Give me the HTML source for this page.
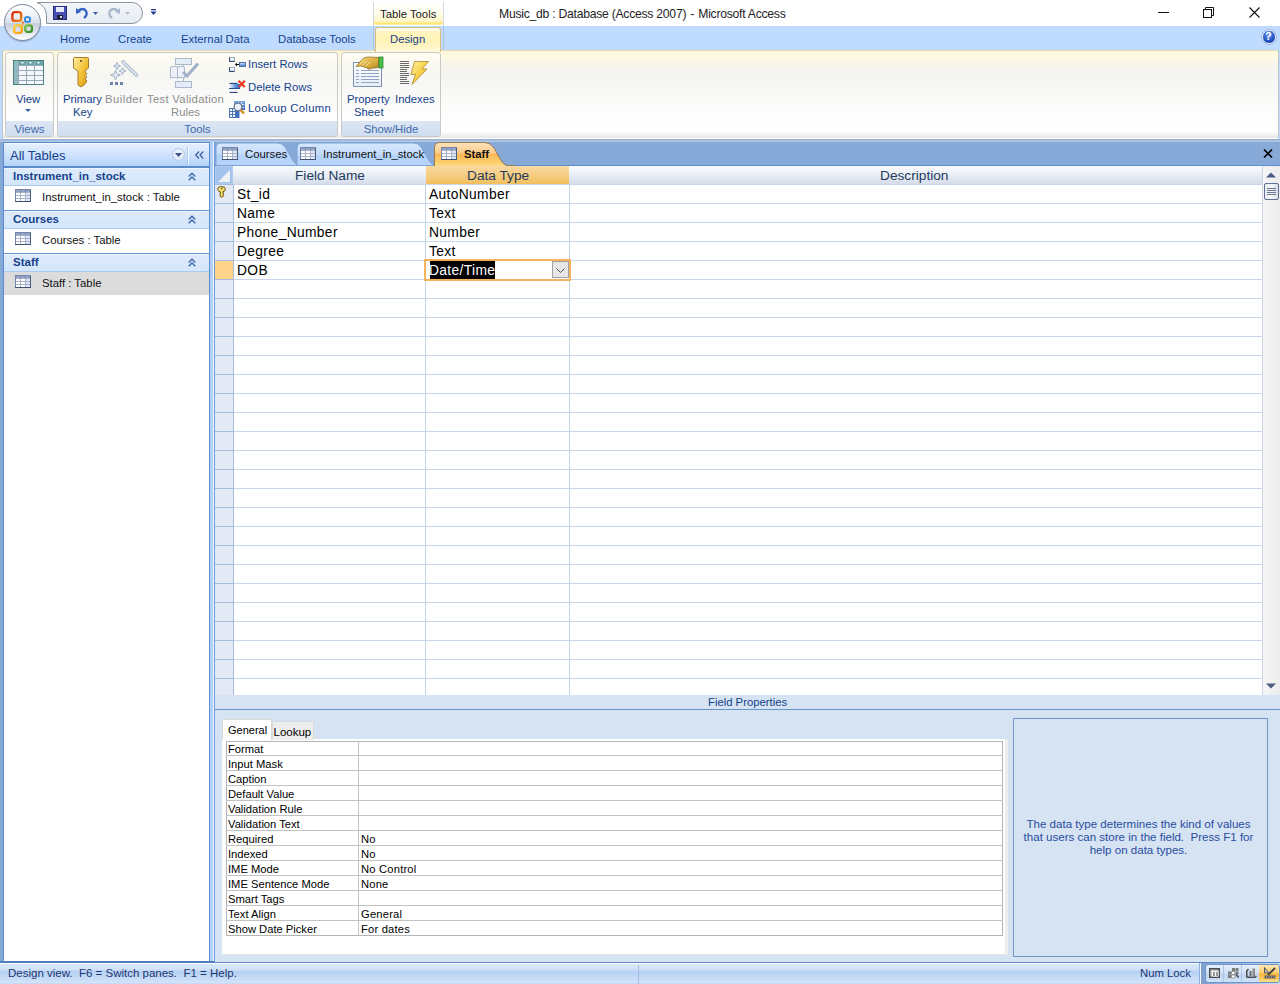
<!DOCTYPE html>
<html><head><meta charset="utf-8">
<style>
*{box-sizing:border-box}
html,body{margin:0;padding:0}
body{width:1280px;height:984px;overflow:hidden;position:relative;background:#BFDBFF;font-family:"Liberation Sans",sans-serif;font-size:12px;color:#000}
.a{position:absolute}
.t{position:absolute;white-space:nowrap;line-height:1}
svg{position:absolute;overflow:visible}
.tab{color:#15428B;font-size:11.3px;margin-top:1px}
.grp{position:absolute;top:52px;height:85px;border:1px solid #C9C9C6;border-radius:3px;background:linear-gradient(#FEFCF2,#F8F7F1 20%,#F6F6F4 30%,#FBFBFA 60%,#fff 85%)}
.glbl{position:absolute;left:0;right:0;bottom:0;height:15px;background:linear-gradient(#DDE6F3,#CFDDF0);color:#3D6AAC;text-align:center;font-size:11.3px;line-height:17px;border-radius:0 0 2px 2px}
.rb{color:#15428B;font-size:11.3px}
.dis{color:#8C8C8C}
.pf{font-size:11.2px;color:#000}
.dsf{font-size:13.8px;letter-spacing:0.35px;color:#000}
</style></head><body>

<!-- ========== TITLE BAR ========== -->
<div class="a" style="left:0;top:0;width:1280px;height:26px;background:#fff"></div>
<!-- QAT pill -->
<svg style="left:0;top:0" width="160" height="26" viewBox="0 0 160 26">
 <defs><linearGradient id="qg" x1="0" y1="0" x2="0" y2="1"><stop offset="0" stop-color="#F3F6FA"/><stop offset="1" stop-color="#E6ECF3"/></linearGradient></defs>
 <path d="M37 2.5 H132 A10.5 10.5 0 0 1 132 23.5 H46.5 V16 Q46.5 6 37 2.5 Z" fill="url(#qg)" stroke="#8C939C" stroke-width="1"/>
</svg>
<!-- save -->
<svg style="left:53px;top:6px" width="14" height="14" viewBox="0 0 14 14">
 <rect x="0.5" y="0.5" width="13" height="13" fill="#4A4FB8" stroke="#2A2E7A"/>
 <rect x="3" y="1" width="8" height="5" fill="#E8EAF8"/>
 <rect x="4" y="9" width="6" height="4" fill="#1E1E2E"/>
 <rect x="7" y="10" width="2" height="2" fill="#ddd"/>
</svg>
<!-- undo -->
<svg style="left:75px;top:6px" width="30" height="14" viewBox="0 0 30 14">
 <path d="M3 5 Q8 1 11 5 Q13 9 9 12" fill="none" stroke="#3564C2" stroke-width="2.3"/>
 <path d="M1 2 L1 8 L6 6 Z" fill="#3564C2"/>
 <path d="M18 6 L23 6 L20.5 9 Z" fill="#3B5FA8"/>
</svg>
<!-- redo -->
<svg style="left:106px;top:6px" width="30" height="14" viewBox="0 0 30 14">
 <path d="M12 5 Q7 1 4 5 Q2 9 6 12" fill="none" stroke="#A9B6CB" stroke-width="2.3"/>
 <path d="M14 2 L14 8 L9 6 Z" fill="#A9B6CB"/>
 <path d="M19 6 L24 6 L21.5 9 Z" fill="#B3BCCB"/>
</svg>
<!-- customize qat -->
<svg style="left:150px;top:8px" width="8" height="8" viewBox="0 0 8 8">
 <rect x="1" y="1" width="5" height="1.3" fill="#1F3D8A"/>
 <path d="M0.5 3.5 L6.5 3.5 L3.5 7 Z" fill="#1F3D8A"/>
</svg>
<!-- Table Tools contextual header -->
<div class="a" style="left:373px;top:2px;width:71px;height:24px;background:linear-gradient(#FFFFFF,#FFFDF0 40%,#FFF6C8 80%,#FFE45A 92%,#FFFFFF 96%);border-left:1px solid #D6D9DE;border-right:1px solid #D6D9DE"></div>
<div class="t" style="left:380px;top:9px;font-size:11.3px;color:#1A1A1A">Table Tools</div>
<div class="t" style="left:499px;top:8px;font-size:12.2px;letter-spacing:-0.26px;color:#1E1E1E">Music_db : Database (Access 2007) <span style="margin:0 1px">-</span> Microsoft Access</div>
<!-- window controls -->
<svg style="left:1158px;top:12px" width="11" height="2"><rect width="11" height="1" fill="#111"/></svg>
<svg style="left:1203px;top:7px" width="11" height="11" viewBox="0 0 11 11"><rect x="0.5" y="2.5" width="8" height="8" fill="none" stroke="#111"/><path d="M2.5 2.5 V0.5 H10.5 V8.5 H8.5" fill="none" stroke="#111"/></svg>
<svg style="left:1249px;top:7px" width="11" height="11" viewBox="0 0 11 11"><path d="M0.5 0.5 L10.5 10.5 M10.5 0.5 L0.5 10.5" stroke="#111" stroke-width="1.1"/></svg>

<!-- ========== TAB ROW ========== -->
<div class="a" style="left:0;top:26px;width:1280px;height:24px;background:#BFDBFF"></div>
<div class="a" style="left:373px;top:26px;width:1px;height:24px;background:#AFC3DB"></div>
<div class="a" style="left:443px;top:26px;width:1px;height:24px;background:#AFC3DB"></div>
<div class="t tab" style="left:60px;top:33px">Home</div>
<div class="t tab" style="left:118px;top:33px">Create</div>
<div class="t tab" style="left:181px;top:33px">External Data</div>
<div class="t tab" style="left:278px;top:33px">Database Tools</div>
<!-- help -->
<div class="a" style="left:1262px;top:30px;width:14px;height:14px;border-radius:50%;background:radial-gradient(circle at 45% 35%,#6E9BF0,#1C4FC2 60%,#0C2F8E);border:1px solid #E9EEF7;box-shadow:0 0 0 0.5px #6C86B4"></div>
<div class="t" style="left:1265px;top:31px;font-size:11px;font-weight:bold;color:#fff">?</div>

<!-- ========== RIBBON ========== -->
<div class="a" style="left:2px;top:50px;width:1277px;height:89px;border:1px solid #C2C2C0;border-top-color:#E6DDB8;border-bottom-color:#FFFFFF;border-radius:3px;background:linear-gradient(#FFF8DA 0px,#FEF9E4 6px,#F5F4EE 18px,#F6F6F3 30px,#FCFCFB 55px,#FFFFFF 80px,#F2F2F2 84px,#E6E6E6 87px)"></div>
<!-- Design tab -->
<div class="a" style="left:375px;top:27px;width:66px;height:25px;border:1px solid #D3C07F;border-bottom:none;border-radius:3px 3px 0 0;background:linear-gradient(#FFFDF2 0,#FFFDF2 2px,#FFF5C0 3px,#FFF3B6 50%,#FFF7D2 100%)"></div>
<div class="a" style="left:376px;top:49px;width:64px;height:3px;background:#FFF7D6"></div>
<div class="t tab" style="left:390px;top:33px">Design</div>

<!-- Views group -->
<div class="grp" style="left:5px;width:49px"><div class="glbl">Views</div></div>
<!-- Tools group -->
<div class="grp" style="left:57px;width:281px"><div class="glbl">Tools</div></div>
<!-- Show/Hide group -->
<div class="grp" style="left:341px;width:100px"><div class="glbl">Show/Hide</div></div>

<!-- View icon -->
<svg style="left:13px;top:60px" width="31" height="25" viewBox="0 0 31 25">
 <rect x="0.5" y="0.5" width="30" height="24" fill="#F4F7FB" stroke="#4F7F86"/>
 <rect x="1" y="1" width="29" height="4" fill="#6AA5A8"/>
 <rect x="1" y="1" width="4" height="23" fill="#8FBCBE"/>
 <path d="M5 5.5 H30 M1 10.5 H30 M1 15.5 H30 M1 20.5 H30 M5.5 1 V24 M13.5 1 V24 M21.5 1 V24" stroke="#9AA9B8" stroke-width="1"/>
 <path d="M8 2 L11 2 L9.5 4 Z M16 2 L19 2 L17.5 4 Z M24 2 L27 2 L25.5 4 Z" fill="#fff"/>
</svg>
<div class="t rb" style="left:16px;top:94px">View</div>
<svg style="left:25px;top:109px" width="6" height="4"><path d="M0 0 H6 L3 3 Z" fill="#3A5F9F"/></svg>

<!-- Primary key -->
<svg style="left:72px;top:56px" width="18" height="32" viewBox="0 0 18 32">
 <defs><linearGradient id="kg" x1="0" y1="0" x2="1" y2="1"><stop offset="0" stop-color="#FFF2A8"/><stop offset="0.5" stop-color="#F3C43A"/><stop offset="1" stop-color="#D99A16"/></linearGradient></defs>
 <path d="M2.5 1.5 H15.5 Q16.5 1.5 16.5 2.5 V12 L13 15 V16 L15 17.5 L13 19.5 L15 21 L13 23 L15 25 L12 29 L9 31 L6 29 V15 L1.5 12 V2.5 Q1.5 1.5 2.5 1.5 Z" fill="url(#kg)" stroke="#A67A2E" stroke-width="1"/>
 <rect x="8" y="4" width="2" height="2" fill="#8A6A2A"/>
</svg>
<div class="t rb" style="left:63px;top:94px">Primary</div>
<div class="t rb" style="left:73px;top:107px">Key</div>

<!-- Builder -->
<svg style="left:110px;top:60px" width="28" height="25" viewBox="0 0 28 25">
 <path d="M13 2 L26.5 15" stroke="#A9B7CC" stroke-width="3.6" stroke-linecap="round"/>
 <path d="M13 2 L26.5 15" stroke="#E6ECF4" stroke-width="1.6" stroke-linecap="round"/>
 <path d="M7 2.4 L8.008000000000001 4.992 L10.6 6 L8.008000000000001 7.008 L7 9.6 L5.992 7.008 L3.4 6 L5.992 4.992 Z" fill="#E3E9F2" stroke="#9AABC3" stroke-width="0.9"/>
 <path d="M12.5 7.4 L13.508000000000001 9.991999999999999 L16.1 11 L13.508000000000001 12.008000000000001 L12.5 14.6 L11.491999999999999 12.008000000000001 L8.9 11 L11.491999999999999 9.991999999999999 Z" fill="#E3E9F2" stroke="#9AABC3" stroke-width="0.9"/>
 <path d="M5.5 10 L6.9 13.6 L10.5 15 L6.9 16.4 L5.5 20 L4.1 16.4 L0.5 15 L4.1 13.6 Z" fill="#E3E9F2" stroke="#9AABC3" stroke-width="0.9"/>
 <rect x="0" y="22" width="3" height="3" fill="#6F84A8"/><rect x="5" y="22" width="3" height="3" fill="#6F84A8"/><rect x="10" y="22" width="3" height="3" fill="#6F84A8"/>
</svg>
<div class="t rb dis" style="left:105px;top:94px;letter-spacing:0.45px">Builder</div>

<!-- Test validation rules -->
<svg style="left:170px;top:58px" width="30" height="30" viewBox="0 0 30 30">
 <rect x="5.5" y="0.5" width="16" height="6" fill="#E6ECF5" stroke="#A9B8CD"/>
 <rect x="5.5" y="23.5" width="16" height="6" fill="#E6ECF5" stroke="#A9B8CD"/>
 <path d="M13.5 6.5 V8 M13.5 20 V23.5" stroke="#A9B8CD"/>
 <path d="M0.5 9 Q4 7.5 7.5 9 Q11 7.5 14.5 9 V20 Q11 18.5 7.5 20 Q4 18.5 0.5 20 Z" fill="#EEF2F8" stroke="#A9B8CD"/>
 <path d="M7.5 9 V20" stroke="#A9B8CD"/>
 <path d="M13 14 L17 18 L28 5.5" fill="none" stroke="#A0B0C8" stroke-width="3"/>
</svg>
<div class="t rb dis" style="left:147px;top:94px;letter-spacing:0.3px">Test Validation</div>
<div class="t rb dis" style="left:171px;top:107px">Rules</div>

<!-- small buttons -->
<svg style="left:229px;top:57px" width="17" height="15" viewBox="0 0 17 15">
 <defs><linearGradient id="wg" x1="0" y1="0" x2="0" y2="1"><stop offset="0" stop-color="#FFFFFF"/><stop offset="1" stop-color="#C9D8EE"/></linearGradient>
 <linearGradient id="bg1" x1="0" y1="0" x2="0" y2="1"><stop offset="0" stop-color="#D6E6FC"/><stop offset="1" stop-color="#3F78D2"/></linearGradient></defs>
 <rect x="0.5" y="0.5" width="5" height="4" fill="url(#wg)" stroke="#8696B3" stroke-width="0.8"/>
 <path d="M0.5 4.5 H5.5 M0.5 0.5 V4.5" stroke="#33466E" stroke-width="1"/>
 <rect x="0.5" y="10.5" width="5" height="4" fill="url(#wg)" stroke="#8696B3" stroke-width="0.8"/>
 <path d="M0.5 14.5 H5.5 M0.5 10.5 V14.5" stroke="#33466E" stroke-width="1"/>
 <path d="M7 7.5 H10" stroke="#000" stroke-width="1"/>
 <path d="M6 7.5 L8 5.8 V9.2 Z" fill="#000"/>
 <rect x="10.5" y="5.5" width="6" height="4" fill="url(#bg1)" stroke="#2E5696" stroke-width="0.8"/>
</svg>
<div class="t rb" style="left:248px;top:59px">Insert Rows</div>
<svg style="left:229px;top:80px" width="17" height="14" viewBox="0 0 17 14">
 <defs><linearGradient id="bg2" x1="0" y1="0" x2="1" y2="0"><stop offset="0" stop-color="#FFFFFF"/><stop offset="0.6" stop-color="#5D92E0"/><stop offset="1" stop-color="#2C5BB0"/></linearGradient></defs>
 <rect x="0.5" y="0.5" width="8" height="3" fill="url(#wg)"/><path d="M0.5 3.5 H8.5" stroke="#33466E"/>
 <rect x="0" y="4" width="11" height="5" fill="url(#bg2)"/><path d="M0 8.5 H11" stroke="#2A4E8E"/>
 <rect x="0.5" y="9.5" width="8" height="3" fill="url(#wg)"/><path d="M0.5 12.5 H8.5" stroke="#33466E"/>
 <path d="M9.5 0.8 L15.8 7 M15.8 0.8 L10 7" stroke="#EE3A22" stroke-width="2.2"/>
</svg>
<div class="t rb" style="left:248px;top:82px">Delete Rows</div>
<svg style="left:229px;top:101px" width="17" height="17" viewBox="0 0 17 17">
 <defs><linearGradient id="bg3" x1="0" y1="0" x2="0" y2="1"><stop offset="0" stop-color="#7FA8E6"/><stop offset="1" stop-color="#3A6CC4"/></linearGradient></defs>
 <rect x="5" y="0" width="11" height="9" fill="url(#bg3)"/>
 <path d="M6 3.5 H15 M6 6.5 H15 M9.5 1 V9 M12.5 1 V9" stroke="#E4EEFB" stroke-width="0.9"/>
 <rect x="0.5" y="7.5" width="9.5" height="9" fill="#F4F8FD" stroke="#4C73B5"/>
 <path d="M0.5 10.5 H10 M0.5 13.5 H10 M3.5 7.5 V16.5 M6.5 7.5 V16.5" stroke="#4C73B5"/>
 <rect x="7" y="9" width="3" height="7.5" fill="#3E6CC0"/>
 <circle cx="9" cy="6" r="3.8" fill="#E9F1FB" stroke="#6F7884" stroke-width="1.3"/>
 <path d="M11.6 8.8 L15 12.3" stroke="#D48B2A" stroke-width="2.6"/>
</svg>
<div class="t rb" style="left:248px;top:103px;letter-spacing:0.3px">Lookup Column</div>

<!-- Property sheet -->
<svg style="left:351px;top:56px" width="34" height="32" viewBox="0 0 34 32">
 <defs><linearGradient id="psg" x1="0" y1="0" x2="0" y2="1"><stop offset="0" stop-color="#FFFFFF"/><stop offset="1" stop-color="#E6EDF7"/></linearGradient>
 <linearGradient id="hg" x1="0" y1="0" x2="1" y2="1"><stop offset="0" stop-color="#F6D77A"/><stop offset="0.6" stop-color="#D9AD3E"/><stop offset="1" stop-color="#A88228"/></linearGradient></defs>
 <rect x="2.5" y="6.5" width="28" height="24" fill="url(#psg)" stroke="#7D92B3"/>
 <path d="M5 14.5 H8 M10 14.5 H28 M5 17.5 H8 M10 17.5 H28 M5 20.5 H8 M10 20.5 H28 M5 23.5 H8 M10 23.5 H28 M5 26.5 H8 M10 26.5 H28" stroke="#8FA3C2"/>
 <path d="M5 10.5 L11 3.5 Q13 1 17 1 L28 1.5 L28 11 Q25 12.5 22 12 L19 13 Q17 13.5 16 12 L13 11 L10 10 Z" fill="url(#hg)" stroke="#8C6C1F" stroke-width="0.7"/>
 <path d="M9 8 L13 4 M12 9 L16 5 M15 10 L19 6" stroke="#FBE9A6" stroke-width="0.8"/>
 <rect x="28" y="1" width="4" height="11" fill="#4CC04A" stroke="#1E7A22" stroke-width="0.7"/>
</svg>
<div class="t rb" style="left:347px;top:94px">Property</div>
<div class="t rb" style="left:354px;top:107px">Sheet</div>

<!-- Indexes -->
<svg style="left:400px;top:61px" width="30" height="25" viewBox="0 0 30 25">
 <defs><linearGradient id="lg" x1="0" y1="0" x2="1" y2="1"><stop offset="0" stop-color="#FFF2A0"/><stop offset="0.5" stop-color="#F8D048"/><stop offset="1" stop-color="#F0B830"/></linearGradient></defs>
 <rect x="0" y="0" width="9" height="1" fill="#6A6A6A"/><rect x="0" y="2" width="9" height="1" fill="#6A6A6A"/><rect x="0" y="4" width="9" height="1" fill="#6A6A6A"/><rect x="0" y="6" width="9" height="1" fill="#6A6A6A"/><rect x="0" y="8" width="7" height="1" fill="#6A6A6A"/><rect x="0" y="10" width="7" height="1" fill="#6A6A6A"/><rect x="0" y="12" width="9" height="1" fill="#6A6A6A"/><rect x="0" y="14" width="9" height="1" fill="#6A6A6A"/><rect x="0" y="16" width="7" height="1" fill="#6A6A6A"/><rect x="0" y="18" width="7" height="1" fill="#6A6A6A"/><rect x="0" y="20" width="9" height="1" fill="#6A6A6A"/><rect x="0" y="22" width="9" height="1" fill="#6A6A6A"/>
 <path d="M14.5 0.5 H28.5 L22 8 H27 L12 23.5 L15.5 13.5 H11 Z" fill="url(#lg)" stroke="#B08526" stroke-width="0.8"/>
</svg>
<div class="t rb" style="left:395px;top:94px">Indexes</div>


<!-- ========== NAV PANE ========== -->
<div class="a" style="left:0;top:139px;width:1280px;height:3px;background:linear-gradient(#95ACCD,#B6CDEB)"></div>
<div class="a" style="left:0;top:142px;width:3px;height:819px;background:#87A9D8"></div>
<div class="a" style="left:0;top:961px;width:214px;height:2px;background:#4F7EC0"></div>
<div class="a" style="left:3px;top:142px;width:207px;height:821px;background:#fff;border:1px solid #5B8BCB;border-bottom:2px solid #4F7FC0"></div>
<div class="a" style="left:4px;top:143px;width:205px;height:23px;background:linear-gradient(#FFFFFF 0,#E5F0FE 1px,#CFE2FC 50%,#B4D3F9 100%)"></div>
<div class="t" style="left:10px;top:149px;font-size:13px;color:#15428B">All Tables</div>
<div class="a" style="left:172px;top:148px;width:13px;height:13px;border-radius:50%;background:radial-gradient(circle at 50% 40%,#F3F7FD,#D2E2F7);border:1px solid #B9CBE4"></div>
<svg style="left:175px;top:153px" width="7" height="4"><path d="M0 0 H7 L3.5 4 Z" fill="#3B4E8C"/></svg>
<div class="a" style="left:187px;top:146px;width:2px;height:18px;background:linear-gradient(90deg,#A6C8F2 50%,#FFFFFF 50%)"></div>
<svg style="left:195px;top:151px" width="9" height="8" viewBox="0 0 9 8"><path d="M4 0.5 L0.8 4 L4 7.5 M8.2 0.5 L5 4 L8.2 7.5" fill="none" stroke="#3A5F9F" stroke-width="1.3"/></svg>
<div class="a" style="left:4px;top:166px;width:205px;height:2px;background:#5B8BCB"></div>

<!-- group: Instrument_in_stock -->
<div class="a" style="left:4px;top:168px;width:205px;height:18px;background:linear-gradient(#FFFFFF 0,#DDEAFC 1px,#D5E6FB 100%);border-bottom:1px solid #A8CAF3"></div>
<div class="t" style="left:13px;top:171px;font-size:11.5px;font-weight:bold;color:#15428B">Instrument_in_stock</div>
<svg style="left:188px;top:172px" width="8" height="9" viewBox="0 0 8 9"><path d="M0.7 4.5 L4 1.2 L7.3 4.5 M0.7 8.3 L4 5 L7.3 8.3" fill="none" stroke="#3A64A8" stroke-width="1.3"/></svg>
<div class="t" style="left:42px;top:192px;font-size:11.35px;color:#111">Instrument_in_stock : Table</div>
<div class="a" style="left:4px;top:210px;width:205px;height:1px;background:#6A98D4"></div>

<!-- group: Courses -->
<div class="a" style="left:4px;top:211px;width:205px;height:18px;background:linear-gradient(#FFFFFF 0,#DDEAFC 1px,#D5E6FB 100%);border-bottom:1px solid #A8CAF3"></div>
<div class="t" style="left:13px;top:214px;font-size:11.5px;font-weight:bold;color:#15428B">Courses</div>
<svg style="left:188px;top:215px" width="8" height="9" viewBox="0 0 8 9"><path d="M0.7 4.5 L4 1.2 L7.3 4.5 M0.7 8.3 L4 5 L7.3 8.3" fill="none" stroke="#3A64A8" stroke-width="1.3"/></svg>
<div class="t" style="left:42px;top:235px;font-size:11.35px;color:#111">Courses : Table</div>
<div class="a" style="left:4px;top:253px;width:205px;height:1px;background:#6A98D4"></div>

<!-- group: Staff -->
<div class="a" style="left:4px;top:254px;width:205px;height:18px;background:linear-gradient(#FFFFFF 0,#DDEAFC 1px,#D5E6FB 100%);border-bottom:1px solid #A8CAF3"></div>
<div class="t" style="left:13px;top:257px;font-size:11.5px;font-weight:bold;color:#15428B">Staff</div>
<svg style="left:188px;top:258px" width="8" height="9" viewBox="0 0 8 9"><path d="M0.7 4.5 L4 1.2 L7.3 4.5 M0.7 8.3 L4 5 L7.3 8.3" fill="none" stroke="#3A64A8" stroke-width="1.3"/></svg>
<div class="a" style="left:4px;top:272px;width:205px;height:23px;background:#DCDCDC"></div>
<div class="t" style="left:42px;top:278px;font-size:11.35px;color:#111">Staff : Table</div>

<svg style="left:15px;top:189px" width="16" height="13" viewBox="0 0 16 13"><rect x="0" y="0" width="16" height="13" fill="#7686A8"/><rect x="1" y="1" width="14" height="11" fill="#A7B2C8"/><rect x="1" y="1" width="14" height="2" fill="#8494BA"/><path d="M1.5 2 H4.5 M6.5 2 H9.5 M11.5 2 H14.5" stroke="#B5C2DC" stroke-width="0.8"/><rect x="1" y="4" width="4" height="2" fill="#FFFFFF"/><rect x="1" y="7" width="4" height="2" fill="#FFFFFF"/><rect x="1" y="10" width="4" height="2" fill="#FFFFFF"/><rect x="6" y="4" width="4" height="2" fill="#FFFFFF"/><rect x="6" y="7" width="4" height="2" fill="#FFFFFF"/><rect x="6" y="10" width="4" height="2" fill="#FFFFFF"/><rect x="11" y="4" width="4" height="2" fill="#DCE6F6"/><rect x="11" y="7" width="4" height="2" fill="#DCE6F6"/><rect x="11" y="10" width="4" height="2" fill="#DCE6F6"/><rect x="15" y="1" width="1" height="12" fill="#4A5C80"/><rect x="0" y="12" width="16" height="1" fill="#3E5074"/></svg>
<svg style="left:15px;top:232px" width="16" height="13" viewBox="0 0 16 13"><rect x="0" y="0" width="16" height="13" fill="#7686A8"/><rect x="1" y="1" width="14" height="11" fill="#A7B2C8"/><rect x="1" y="1" width="14" height="2" fill="#8494BA"/><path d="M1.5 2 H4.5 M6.5 2 H9.5 M11.5 2 H14.5" stroke="#B5C2DC" stroke-width="0.8"/><rect x="1" y="4" width="4" height="2" fill="#FFFFFF"/><rect x="1" y="7" width="4" height="2" fill="#FFFFFF"/><rect x="1" y="10" width="4" height="2" fill="#FFFFFF"/><rect x="6" y="4" width="4" height="2" fill="#FFFFFF"/><rect x="6" y="7" width="4" height="2" fill="#FFFFFF"/><rect x="6" y="10" width="4" height="2" fill="#FFFFFF"/><rect x="11" y="4" width="4" height="2" fill="#DCE6F6"/><rect x="11" y="7" width="4" height="2" fill="#DCE6F6"/><rect x="11" y="10" width="4" height="2" fill="#DCE6F6"/><rect x="15" y="1" width="1" height="12" fill="#4A5C80"/><rect x="0" y="12" width="16" height="1" fill="#3E5074"/></svg>
<svg style="left:15px;top:275px" width="16" height="13" viewBox="0 0 16 13"><rect x="0" y="0" width="16" height="13" fill="#7686A8"/><rect x="1" y="1" width="14" height="11" fill="#A7B2C8"/><rect x="1" y="1" width="14" height="2" fill="#8494BA"/><path d="M1.5 2 H4.5 M6.5 2 H9.5 M11.5 2 H14.5" stroke="#B5C2DC" stroke-width="0.8"/><rect x="1" y="4" width="4" height="2" fill="#FFFFFF"/><rect x="1" y="7" width="4" height="2" fill="#FFFFFF"/><rect x="1" y="10" width="4" height="2" fill="#FFFFFF"/><rect x="6" y="4" width="4" height="2" fill="#FFFFFF"/><rect x="6" y="7" width="4" height="2" fill="#FFFFFF"/><rect x="6" y="10" width="4" height="2" fill="#FFFFFF"/><rect x="11" y="4" width="4" height="2" fill="#DCE6F6"/><rect x="11" y="7" width="4" height="2" fill="#DCE6F6"/><rect x="11" y="10" width="4" height="2" fill="#DCE6F6"/><rect x="15" y="1" width="1" height="12" fill="#4A5C80"/><rect x="0" y="12" width="16" height="1" fill="#3E5074"/></svg>

<!-- splitter -->
<div class="a" style="left:210px;top:142px;width:4px;height:819px;background:linear-gradient(90deg,#B3D1F8 0,#B3D1F8 75%,#F0F6FE 75%)"></div>


<!-- ========== DOCUMENT AREA ========== -->
<div class="a" style="left:214px;top:142px;width:66px;height:821px;background:#D5E3F3"></div>
<div class="a" style="left:214px;top:142px;width:1066px;height:24px;background:#86A9D8"></div>
<div class="a" style="left:214px;top:142px;width:1px;height:821px;background:#6B9BD8"></div>
<div class="a" style="left:214px;top:165px;width:1066px;height:1px;background:#5F8FD0"></div>

<!-- tabs -->
<svg style="left:215px;top:142px" width="300" height="24" viewBox="0 0 300 24">
 <defs>
  <linearGradient id="dt" x1="0" y1="0" x2="0" y2="1"><stop offset="0" stop-color="#D6E7FD"/><stop offset="0.5" stop-color="#C3DCFB"/><stop offset="0.55" stop-color="#B3D2F9"/><stop offset="1" stop-color="#B8D5FA"/></linearGradient>
  <linearGradient id="st" x1="0" y1="0" x2="0" y2="1"><stop offset="0" stop-color="#FEE3BE"/><stop offset="0.45" stop-color="#FCCB86"/><stop offset="0.5" stop-color="#FBB756"/><stop offset="1" stop-color="#FDD97A"/></linearGradient>
 </defs>
 <path d="M1 23.5 V6 Q1 1 6 1 H63 Q67 1 70 5 L76 15 Q79 22 84 23.5 Z" fill="url(#dt)" stroke="#7DA2D6" stroke-width="1"/>
 <path d="M82 23.5 V6 Q82 1 87 1 H199 Q203 1 206 5 L212 15 Q215 22 220 23.5 Z" fill="url(#dt)" stroke="#7DA2D6" stroke-width="1"/>
 <path d="M219.5 24 V6 Q219.5 0.5 225 0.5 H270 Q275 0.5 279 6 L284 15 Q287 22 292 23.5 H300" fill="url(#st)" stroke="#9C7C4C" stroke-width="1"/><rect x="220" y="23" width="70" height="1" fill="#FDD98A"/>
</svg>
<svg style="left:222px;top:147px" width="16" height="13" viewBox="0 0 16 13"><rect x="0" y="0" width="16" height="13" fill="#7686A8"/><rect x="1" y="1" width="14" height="11" fill="#A7B2C8"/><rect x="1" y="1" width="14" height="2" fill="#8494BA"/><path d="M1.5 2 H4.5 M6.5 2 H9.5 M11.5 2 H14.5" stroke="#B5C2DC" stroke-width="0.8"/><rect x="1" y="4" width="4" height="2" fill="#FFFFFF"/><rect x="1" y="7" width="4" height="2" fill="#FFFFFF"/><rect x="1" y="10" width="4" height="2" fill="#FFFFFF"/><rect x="6" y="4" width="4" height="2" fill="#FFFFFF"/><rect x="6" y="7" width="4" height="2" fill="#FFFFFF"/><rect x="6" y="10" width="4" height="2" fill="#FFFFFF"/><rect x="11" y="4" width="4" height="2" fill="#DCE6F6"/><rect x="11" y="7" width="4" height="2" fill="#DCE6F6"/><rect x="11" y="10" width="4" height="2" fill="#DCE6F6"/><rect x="15" y="1" width="1" height="12" fill="#4A5C80"/><rect x="0" y="12" width="16" height="1" fill="#3E5074"/></svg>
<svg style="left:300px;top:147px" width="16" height="13" viewBox="0 0 16 13"><rect x="0" y="0" width="16" height="13" fill="#7686A8"/><rect x="1" y="1" width="14" height="11" fill="#A7B2C8"/><rect x="1" y="1" width="14" height="2" fill="#8494BA"/><path d="M1.5 2 H4.5 M6.5 2 H9.5 M11.5 2 H14.5" stroke="#B5C2DC" stroke-width="0.8"/><rect x="1" y="4" width="4" height="2" fill="#FFFFFF"/><rect x="1" y="7" width="4" height="2" fill="#FFFFFF"/><rect x="1" y="10" width="4" height="2" fill="#FFFFFF"/><rect x="6" y="4" width="4" height="2" fill="#FFFFFF"/><rect x="6" y="7" width="4" height="2" fill="#FFFFFF"/><rect x="6" y="10" width="4" height="2" fill="#FFFFFF"/><rect x="11" y="4" width="4" height="2" fill="#DCE6F6"/><rect x="11" y="7" width="4" height="2" fill="#DCE6F6"/><rect x="11" y="10" width="4" height="2" fill="#DCE6F6"/><rect x="15" y="1" width="1" height="12" fill="#4A5C80"/><rect x="0" y="12" width="16" height="1" fill="#3E5074"/></svg>
<svg style="left:441px;top:147px" width="16" height="13" viewBox="0 0 16 13"><rect x="0" y="0" width="16" height="13" fill="#7686A8"/><rect x="1" y="1" width="14" height="11" fill="#A7B2C8"/><rect x="1" y="1" width="14" height="2" fill="#8494BA"/><path d="M1.5 2 H4.5 M6.5 2 H9.5 M11.5 2 H14.5" stroke="#B5C2DC" stroke-width="0.8"/><rect x="1" y="4" width="4" height="2" fill="#FFFFFF"/><rect x="1" y="7" width="4" height="2" fill="#FFFFFF"/><rect x="1" y="10" width="4" height="2" fill="#FFFFFF"/><rect x="6" y="4" width="4" height="2" fill="#FFFFFF"/><rect x="6" y="7" width="4" height="2" fill="#FFFFFF"/><rect x="6" y="10" width="4" height="2" fill="#FFFFFF"/><rect x="11" y="4" width="4" height="2" fill="#DCE6F6"/><rect x="11" y="7" width="4" height="2" fill="#DCE6F6"/><rect x="11" y="10" width="4" height="2" fill="#DCE6F6"/><rect x="15" y="1" width="1" height="12" fill="#4A5C80"/><rect x="0" y="12" width="16" height="1" fill="#3E5074"/></svg>
<div class="t" style="left:245px;top:148.5px;font-size:11.3px;color:#111">Courses</div>
<div class="t" style="left:323px;top:148.5px;font-size:11.3px;color:#111">Instrument_in_stock</div>
<div class="t" style="left:464px;top:148.5px;font-size:11.3px;font-weight:bold;color:#111">Staff</div>
<svg style="left:1263px;top:149px" width="10" height="9" viewBox="0 0 10 9"><path d="M1 0.5 L9 8.5 M9 0.5 L1 8.5" stroke="#000" stroke-width="1.7"/></svg>

<!-- grid -->
<div class="a" style="left:215px;top:166px;width:1047px;height:529px;background:#fff"></div>
<div class="a" style="left:215px;top:166px;width:18px;height:529px;background:#E3EAF6"></div>
<div class="a" style="left:233px;top:184px;width:1029px;height:1px;background:#C9D5E8"></div>
<div class="a" style="left:215px;top:184px;width:18px;height:1px;background:#A7BDDC"></div>
<div class="a" style="left:233px;top:203px;width:1029px;height:1px;background:#C9D5E8"></div>
<div class="a" style="left:215px;top:203px;width:18px;height:1px;background:#A7BDDC"></div>
<div class="a" style="left:233px;top:222px;width:1029px;height:1px;background:#C9D5E8"></div>
<div class="a" style="left:215px;top:222px;width:18px;height:1px;background:#A7BDDC"></div>
<div class="a" style="left:233px;top:241px;width:1029px;height:1px;background:#C9D5E8"></div>
<div class="a" style="left:215px;top:241px;width:18px;height:1px;background:#A7BDDC"></div>
<div class="a" style="left:233px;top:260px;width:1029px;height:1px;background:#C9D5E8"></div>
<div class="a" style="left:215px;top:260px;width:18px;height:1px;background:#A7BDDC"></div>
<div class="a" style="left:233px;top:279px;width:1029px;height:1px;background:#C9D5E8"></div>
<div class="a" style="left:215px;top:279px;width:18px;height:1px;background:#A7BDDC"></div>
<div class="a" style="left:233px;top:298px;width:1029px;height:1px;background:#C9D5E8"></div>
<div class="a" style="left:215px;top:298px;width:18px;height:1px;background:#A7BDDC"></div>
<div class="a" style="left:233px;top:317px;width:1029px;height:1px;background:#C9D5E8"></div>
<div class="a" style="left:215px;top:317px;width:18px;height:1px;background:#A7BDDC"></div>
<div class="a" style="left:233px;top:336px;width:1029px;height:1px;background:#C9D5E8"></div>
<div class="a" style="left:215px;top:336px;width:18px;height:1px;background:#A7BDDC"></div>
<div class="a" style="left:233px;top:355px;width:1029px;height:1px;background:#C9D5E8"></div>
<div class="a" style="left:215px;top:355px;width:18px;height:1px;background:#A7BDDC"></div>
<div class="a" style="left:233px;top:374px;width:1029px;height:1px;background:#C9D5E8"></div>
<div class="a" style="left:215px;top:374px;width:18px;height:1px;background:#A7BDDC"></div>
<div class="a" style="left:233px;top:393px;width:1029px;height:1px;background:#C9D5E8"></div>
<div class="a" style="left:215px;top:393px;width:18px;height:1px;background:#A7BDDC"></div>
<div class="a" style="left:233px;top:412px;width:1029px;height:1px;background:#C9D5E8"></div>
<div class="a" style="left:215px;top:412px;width:18px;height:1px;background:#A7BDDC"></div>
<div class="a" style="left:233px;top:431px;width:1029px;height:1px;background:#C9D5E8"></div>
<div class="a" style="left:215px;top:431px;width:18px;height:1px;background:#A7BDDC"></div>
<div class="a" style="left:233px;top:450px;width:1029px;height:1px;background:#C9D5E8"></div>
<div class="a" style="left:215px;top:450px;width:18px;height:1px;background:#A7BDDC"></div>
<div class="a" style="left:233px;top:469px;width:1029px;height:1px;background:#C9D5E8"></div>
<div class="a" style="left:215px;top:469px;width:18px;height:1px;background:#A7BDDC"></div>
<div class="a" style="left:233px;top:488px;width:1029px;height:1px;background:#C9D5E8"></div>
<div class="a" style="left:215px;top:488px;width:18px;height:1px;background:#A7BDDC"></div>
<div class="a" style="left:233px;top:507px;width:1029px;height:1px;background:#C9D5E8"></div>
<div class="a" style="left:215px;top:507px;width:18px;height:1px;background:#A7BDDC"></div>
<div class="a" style="left:233px;top:526px;width:1029px;height:1px;background:#C9D5E8"></div>
<div class="a" style="left:215px;top:526px;width:18px;height:1px;background:#A7BDDC"></div>
<div class="a" style="left:233px;top:545px;width:1029px;height:1px;background:#C9D5E8"></div>
<div class="a" style="left:215px;top:545px;width:18px;height:1px;background:#A7BDDC"></div>
<div class="a" style="left:233px;top:564px;width:1029px;height:1px;background:#C9D5E8"></div>
<div class="a" style="left:215px;top:564px;width:18px;height:1px;background:#A7BDDC"></div>
<div class="a" style="left:233px;top:583px;width:1029px;height:1px;background:#C9D5E8"></div>
<div class="a" style="left:215px;top:583px;width:18px;height:1px;background:#A7BDDC"></div>
<div class="a" style="left:233px;top:602px;width:1029px;height:1px;background:#C9D5E8"></div>
<div class="a" style="left:215px;top:602px;width:18px;height:1px;background:#A7BDDC"></div>
<div class="a" style="left:233px;top:621px;width:1029px;height:1px;background:#C9D5E8"></div>
<div class="a" style="left:215px;top:621px;width:18px;height:1px;background:#A7BDDC"></div>
<div class="a" style="left:233px;top:640px;width:1029px;height:1px;background:#C9D5E8"></div>
<div class="a" style="left:215px;top:640px;width:18px;height:1px;background:#A7BDDC"></div>
<div class="a" style="left:233px;top:659px;width:1029px;height:1px;background:#C9D5E8"></div>
<div class="a" style="left:215px;top:659px;width:18px;height:1px;background:#A7BDDC"></div>
<div class="a" style="left:233px;top:678px;width:1029px;height:1px;background:#C9D5E8"></div>
<div class="a" style="left:215px;top:678px;width:18px;height:1px;background:#A7BDDC"></div>
<div class="a" style="left:233px;top:184px;width:1px;height:511px;background:#A7BDDC"></div>
<div class="a" style="left:425px;top:166px;width:1px;height:529px;background:#C5D3E8"></div>
<div class="a" style="left:569px;top:166px;width:1px;height:529px;background:#C5D3E8"></div>
<!-- header -->
<div class="a" style="left:233px;top:166px;width:1029px;height:18px;background:linear-gradient(#F9FBFD,#E9EEF6 50%,#D5DDEA)"></div>
<div class="a" style="left:426px;top:166px;width:143px;height:18px;background:linear-gradient(#F9D9A1,#F3C56E 80%,#F2BE5A)"></div>
<div class="a" style="left:215px;top:166px;width:18px;height:18px;background:#B1CDF2"></div>
<div class="a" style="left:216px;top:167px;width:16px;height:16px;background:#A4C3EC"></div>
<svg style="left:218px;top:170px" width="12" height="12"><path d="M12 0 V12 H0 Z" fill="#EEF1F5"/></svg>
<div class="a" style="left:215px;top:271px;width:18px;height:0px"></div>
<div class="t" style="left:295px;top:168.5px;font-size:13.7px;color:#1E395B">Field Name</div>
<div class="t" style="left:467px;top:168.5px;font-size:13.7px;color:#1E395B">Data Type</div>
<div class="t" style="left:880px;top:168.5px;font-size:13.7px;color:#1E395B">Description</div>

<!-- rows -->
<div class="a" style="left:215px;top:261px;width:18px;height:18px;background:#FFD38C"></div>
<svg style="left:217px;top:186px" width="9" height="12" viewBox="0 0 9 12">
 <path d="M4.5 0.6 Q8.4 0.6 8.4 3.2 Q8.4 5.2 5.8 5.8 V6.6 L7 7.4 L5.8 8.3 L7 9.2 L5 11.4 L3.2 10.4 V5.8 Q0.6 5.2 0.6 3.2 Q0.6 0.6 4.5 0.6 Z" fill="#EFE36A" stroke="#6E4B12" stroke-width="1"/>
 <circle cx="4.5" cy="2.6" r="0.8" fill="#7A3A10"/>
 <path d="M2 3.5 Q2.5 1.8 4 1.6" stroke="#FFFBD0" stroke-width="0.7" fill="none"/>
</svg>
<div class="t dsf" style="left:237px;top:188.4px">St_id</div>
<div class="t dsf" style="left:237px;top:207.4px">Name</div>
<div class="t dsf" style="left:237px;top:226.4px">Phone_Number</div>
<div class="t dsf" style="left:237px;top:245.4px">Degree</div>
<div class="t dsf" style="left:237px;top:264.4px">DOB</div>
<div class="t dsf" style="left:429px;top:188.4px">AutoNumber</div>
<div class="t dsf" style="left:429px;top:207.4px">Text</div>
<div class="t dsf" style="left:429px;top:226.4px">Number</div>
<div class="t dsf" style="left:429px;top:245.4px">Text</div>
<!-- selected cell -->
<div class="a" style="left:424px;top:259px;width:147px;height:22px;border:2px solid #F7B35C;background:#fff"></div>
<div class="a" style="left:430px;top:261px;width:65px;height:18px;background:#000"></div>
<div class="t dsf" style="left:429px;top:264.4px;color:#fff">Date/Time</div>
<div class="a" style="left:552px;top:261px;width:17px;height:17px;background:#E6E6E6;border:1px solid #A0A0A0"></div>
<svg style="left:556px;top:268px" width="9" height="5" viewBox="0 0 9 5"><path d="M0.5 0.5 L4.5 4.5 L8.5 0.5" fill="none" stroke="#555" stroke-width="1"/></svg>

<!-- scrollbar -->
<div class="a" style="left:1262px;top:166px;width:18px;height:529px;background:linear-gradient(90deg,#C9D4E5 0,#C9D4E5 1px,#F6F6F6 1px,#F1F1F1 50%,#ECECEC)"></div>
<svg style="left:1266px;top:172px" width="10" height="6"><path d="M0 5.5 L5 0.5 L10 5.5 Z" fill="#4A5A80"/></svg>
<div class="a" style="left:1264px;top:183px;width:15px;height:17px;border:1px solid #5F7196;border-radius:2px;background:linear-gradient(90deg,#E8ECF2,#F7F8FA 50%,#D5DCE6)"></div>
<svg style="left:1267px;top:187px" width="9" height="9"><path d="M0 1.5 H9 M0 3.5 H9 M0 5.5 H9 M0 7.5 H9" stroke="#6A7590" stroke-width="1"/></svg>
<svg style="left:1266px;top:683px" width="10" height="6"><path d="M0 0.5 L5 5.5 L10 0.5 Z" fill="#4A5A80"/></svg>


<!-- ========== FIELD PROPERTIES ========== -->
<div class="a" style="left:215px;top:695px;width:1065px;height:268px;background:#D5E3F3"></div>
<div class="t" style="left:708px;top:697px;font-size:11.3px;color:#15428B">Field Properties</div>
<div class="a" style="left:215px;top:709px;width:1065px;height:1px;background:#6A93CB"></div>
<!-- white panel -->
<div class="a" style="left:222px;top:739px;width:786px;height:216px;background:#fff;border-right:3px solid #EEEEEE;border-bottom:1px solid #E4E4E4"></div>
<!-- tabs -->
<div class="a" style="left:272px;top:721px;width:42px;height:19px;background:#EEEEEE;border:1px solid #DADADA;border-bottom:none"></div>
<div class="a" style="left:222px;top:719px;width:50px;height:21px;background:#fff;border:1px solid #DADADA;border-bottom:none"></div>
<div class="t" style="left:228px;top:724.5px;font-size:11px;color:#000">General</div>
<div class="t" style="left:273.5px;top:726.5px;font-size:11.5px;color:#000">Lookup</div>
<!-- table -->
<div class="a" style="left:226px;top:741px;width:777px;height:195px;border:1px solid #B4B4B4"></div>
<div class="t pf" style="left:228px;top:744px">Format</div>
<div class="a" style="left:226px;top:755px;width:777px;height:1px;background:#C3C3C3"></div>
<div class="t pf" style="left:228px;top:759px">Input Mask</div>
<div class="a" style="left:226px;top:770px;width:777px;height:1px;background:#C3C3C3"></div>
<div class="t pf" style="left:228px;top:774px">Caption</div>
<div class="a" style="left:226px;top:785px;width:777px;height:1px;background:#C3C3C3"></div>
<div class="t pf" style="left:228px;top:789px">Default Value</div>
<div class="a" style="left:226px;top:800px;width:777px;height:1px;background:#C3C3C3"></div>
<div class="t pf" style="left:228px;top:804px">Validation Rule</div>
<div class="a" style="left:226px;top:815px;width:777px;height:1px;background:#C3C3C3"></div>
<div class="t pf" style="left:228px;top:819px">Validation Text</div>
<div class="a" style="left:226px;top:830px;width:777px;height:1px;background:#C3C3C3"></div>
<div class="t pf" style="left:228px;top:834px">Required</div>
<div class="t pf" style="left:361px;top:834px;letter-spacing:0.2px">No</div>
<div class="a" style="left:226px;top:845px;width:777px;height:1px;background:#C3C3C3"></div>
<div class="t pf" style="left:228px;top:849px">Indexed</div>
<div class="t pf" style="left:361px;top:849px;letter-spacing:0.2px">No</div>
<div class="a" style="left:226px;top:860px;width:777px;height:1px;background:#C3C3C3"></div>
<div class="t pf" style="left:228px;top:864px">IME Mode</div>
<div class="t pf" style="left:361px;top:864px;letter-spacing:0.2px">No Control</div>
<div class="a" style="left:226px;top:875px;width:777px;height:1px;background:#C3C3C3"></div>
<div class="t pf" style="left:228px;top:879px">IME Sentence Mode</div>
<div class="t pf" style="left:361px;top:879px;letter-spacing:0.2px">None</div>
<div class="a" style="left:226px;top:890px;width:777px;height:1px;background:#C3C3C3"></div>
<div class="t pf" style="left:228px;top:894px">Smart Tags</div>
<div class="a" style="left:226px;top:905px;width:777px;height:1px;background:#C3C3C3"></div>
<div class="t pf" style="left:228px;top:909px">Text Align</div>
<div class="t pf" style="left:361px;top:909px;letter-spacing:0.2px">General</div>
<div class="a" style="left:226px;top:920px;width:777px;height:1px;background:#C3C3C3"></div>
<div class="t pf" style="left:228px;top:924px">Show Date Picker</div>
<div class="t pf" style="left:361px;top:924px;letter-spacing:0.2px">For dates</div>
<div class="a" style="left:358px;top:741px;width:1px;height:195px;background:#C3C3C3"></div>
<!-- description box -->
<div class="a" style="left:1013px;top:718px;width:255px;height:239px;border:1px solid #7196CA"></div>
<div class="a" style="left:1012px;top:818px;width:253px;text-align:center;font-size:11.55px;line-height:13px;color:#2A4C9E">The data type determines the kind of values<br>that users can store in the field.&nbsp; Press F1 for<br>help on data types.</div>

<div class="a" style="left:214px;top:962px;width:1066px;height:1px;background:#5A86C6"></div>

<!-- ========== STATUS BAR ========== -->
<div class="a" style="left:0;top:963px;width:1280px;height:21px;background:linear-gradient(#FFFFFF 0,#FFFFFF 1px,#D9E7FA 1px,#CFE0F8 7px,#B5D0F3 8px,#C3D9F6 14px,#D3E3F9 20px,#B9D0F0 21px)"></div>
<div class="t" style="left:8px;top:968px;font-size:11.5px;color:#1C3570">Design view.&nbsp; F6 = Switch panes.&nbsp; F1 = Help.</div>
<div class="a" style="left:638px;top:965px;width:1px;height:19px;background:#A5BFE3"></div>
<div class="t" style="left:1140px;top:968px;font-size:11.3px;color:#1C3570">Num Lock</div>
<div class="a" style="left:1199px;top:963px;width:2px;height:21px;background:linear-gradient(90deg,#8EAEDB 50%,#F3F8FE 50%)"></div>
<div class="a" style="left:1201px;top:963px;width:79px;height:21px;background:linear-gradient(90deg,#7E9FCE,#A9C4E8 60%,#C5D9F4)"></div>
<div class="a" style="left:1205px;top:964px;width:75px;height:19px;border:1px solid #6F93C7;border-radius:3px;background:linear-gradient(#E6F0FC,#CFDFF5 50%,#BDD3F1 51%,#D2E3F8)"></div>
<div class="a" style="left:1259px;top:965px;width:20px;height:17px;border-radius:0 2px 2px 0;background:linear-gradient(#FCE7B0,#F9CF75 45%,#F5B637 55%,#FBDE86)"></div>
<div class="a" style="left:1223px;top:965px;width:1px;height:17px;background:#AFC6E6"></div>
<div class="a" style="left:1241px;top:965px;width:1px;height:17px;background:#AFC6E6"></div>
<svg style="left:1209px;top:968px" width="11" height="10" viewBox="0 0 11 10"><rect x="0.75" y="0.75" width="9.5" height="8.5" fill="#F4F4F4" stroke="#4A4A4A" stroke-width="1.5"/><rect x="1.5" y="1.5" width="1" height="1" fill="#555"/><rect x="3.5" y="1.5" width="6" height="1" fill="#777"/><rect x="1.5" y="3.5" width="1" height="5" fill="#999"/><rect x="3.5" y="3.5" width="6" height="5" fill="#FFF"/><rect x="4" y="4.5" width="2" height="1" fill="#333"/><rect x="7" y="4.5" width="2" height="1" fill="#333"/><rect x="4" y="6.5" width="2" height="1" fill="#333"/><rect x="7" y="6.5" width="2" height="1" fill="#333"/></svg>
<svg style="left:1228px;top:968px" width="11" height="10" viewBox="0 0 11 10"><path d="M4 0 H7 V3 H4 Z M7.5 0 H10.5 V3 H7.5 Z M0 3.5 H3 V6.5 H0 Z M7.5 3.5 H10.5 V6 H7.5 Z M0 7 H3 V10 H0 Z" fill="#7A7A7A"/><path d="M3.5 3.5 H7 V6.5 H3.5 Z M3.5 7 H7 V10 H3.5 Z" fill="#fff" stroke="#7A7A7A" stroke-width="0.7"/><path d="M8 6 L10.5 9.5" stroke="#444" stroke-width="1.4"/></svg>
<svg style="left:1246px;top:968px" width="11" height="10" viewBox="0 0 11 10"><path d="M0.75 9.25 V3 L2.5 1 M0.75 9.25 H9 L10.5 8" fill="none" stroke="#4A4A4A" stroke-width="1.5"/><rect x="3.5" y="3" width="2" height="5" fill="#6A6A6A"/><rect x="6.5" y="0.5" width="2.5" height="7.5" fill="#8A8A8A"/></svg>
<svg style="left:1264px;top:967px" width="12" height="12" viewBox="0 0 12 12"><path d="M0.5 0.5 L0.5 6 L5 6 Z" fill="#C7C7C7" stroke="#555" stroke-width="1"/><path d="M11 1 L4 8" stroke="#4A4A4A" stroke-width="2"/><rect x="0.5" y="8.5" width="11" height="3" fill="#5A5A5A"/><path d="M2 10 H3 M4.5 10 H5.5 M7 10 H8 M9.5 10 H10.5" stroke="#DDD" stroke-width="1"/></svg>
<!-- office button -->
<div class="a" style="left:4px;top:4px;width:37px;height:37px;border-radius:50%;background:linear-gradient(#FFFFFF 0%,#EEF1F6 30%,#D8DFE9 52%,#C5CEDC 53%,#DDE3EC 75%,#FFFFFF 100%);border:1px solid #7A889E;box-shadow:0 1px 1px rgba(0,0,0,.25)"></div>
<svg style="left:10px;top:10px" width="25" height="25" viewBox="0 0 25 25">
 <defs>
  <linearGradient id="og1" x1="0" y1="0" x2="1" y2="1"><stop offset="0" stop-color="#D8200A"/><stop offset="1" stop-color="#F28A18"/></linearGradient>
  <linearGradient id="og2" x1="0" y1="0" x2="1" y2="1"><stop offset="0" stop-color="#FFD040"/><stop offset="1" stop-color="#F59A0A"/></linearGradient>
  <linearGradient id="og3" x1="0" y1="0" x2="1" y2="1"><stop offset="0" stop-color="#7CC24A"/><stop offset="1" stop-color="#2F8A22"/></linearGradient>
 </defs>
 <rect x="2.4" y="2.1" width="8.8" height="8.8" rx="2.5" fill="none" stroke="url(#og1)" stroke-width="2.4"/>
 <rect x="15" y="7.1" width="5" height="4.8" rx="1.6" fill="none" stroke="#2A86DA" stroke-width="1.8"/>
 <rect x="4.2" y="15.4" width="7.6" height="7.4" rx="2" fill="none" stroke="url(#og2)" stroke-width="2.3"/>
 <rect x="15.3" y="15.4" width="6.6" height="6.4" rx="2" fill="none" stroke="url(#og3)" stroke-width="2.3"/>
 <circle cx="12.9" cy="12.6" r="1" fill="#E8561A"/><circle cx="13" cy="13" r="0"/>
 <circle cx="13.2" cy="14.2" r="0.9" fill="#F6B52A"/>
</svg>

</body></html>
